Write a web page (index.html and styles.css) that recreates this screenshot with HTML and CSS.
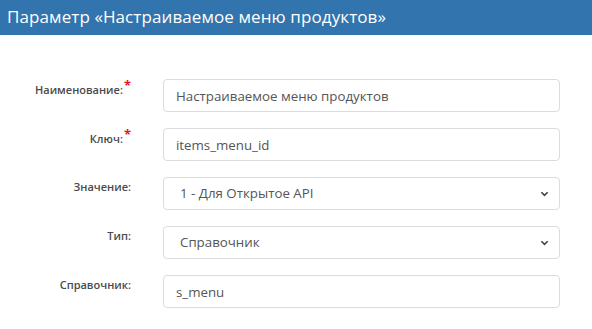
FILE: index.html
```html
<!DOCTYPE html>
<html lang="ru">
<head>
<meta charset="utf-8">
<link rel="stylesheet" href="styles.css">
</head>
<body>
<div class="header">Параметр «Настраиваемое меню продуктов»</div>
<form class="form">
  <label class="label">Наименование:<span class="req">*</span></label>
  <div class="field"><input class="control" type="text" value="Настраиваемое меню продуктов"></div>

  <label class="label">Ключ:<span class="req">*</span></label>
  <div class="field"><input class="control" type="text" value="items_menu_id"></div>

  <label class="label">Значение:</label>
  <div class="field">
    <div class="control select">1 - Для Открытое API</div>
    <svg class="chev" viewBox="0 0 10 6" width="9" height="6"><path d="M1.5 1 L5 4.5 L8.5 1" fill="none" stroke="#444" stroke-width="1.8"/></svg>
  </div>

  <label class="label">Тип:</label>
  <div class="field">
    <div class="control select">Справочник</div>
    <svg class="chev" viewBox="0 0 10 6" width="9" height="6"><path d="M1.5 1 L5 4.5 L8.5 1" fill="none" stroke="#444" stroke-width="1.8"/></svg>
  </div>

  <label class="label">Справочник:</label>
  <div class="field"><input class="control" type="text" value="s_menu"></div>
</form>
</body>
</html>
```
FILE: styles.css
```css
* { box-sizing: border-box; }
body {
  margin: 0;
  background: #fff;
  font-family: "Open Sans", "Noto Sans", sans-serif;
}
.header {
  height: 35px;
  background: #3174ae;
  color: #fff;
  font-size: 17px;
  line-height: 33px;
  padding-left: 7px;
  letter-spacing: 0.1px;
}
.form {
  display: grid;
  grid-template-columns: 131px 397px;
  column-gap: 32px;
  row-gap: 16px;
  padding-top: 44px;
}
.label {
  text-align: right;
  font-size: 11px;
  font-weight: 600;
  color: #4a4a4a;
  padding-top: 3px;
  line-height: 14px;
}
.req {
  color: #e02020;
  font-size: 13px;
  font-weight: 700;
  position: relative;
  top: -4px;
  margin-left: 1px;
}
.field { position: relative; }
.control {
  display: block;
  width: 397px;
  height: 33px;
  border: 1px solid #dcdcdc;
  border-radius: 4px;
  padding: 0 12px;
  font-family: inherit;
  font-size: 13.3px;
  color: #555;
  background: #fff;
  outline: none;
}
.select {
  line-height: 31px;
  padding-left: 16px;
}
.chev {
  position: absolute;
  right: 11px;
  top: 14px;
}
```
